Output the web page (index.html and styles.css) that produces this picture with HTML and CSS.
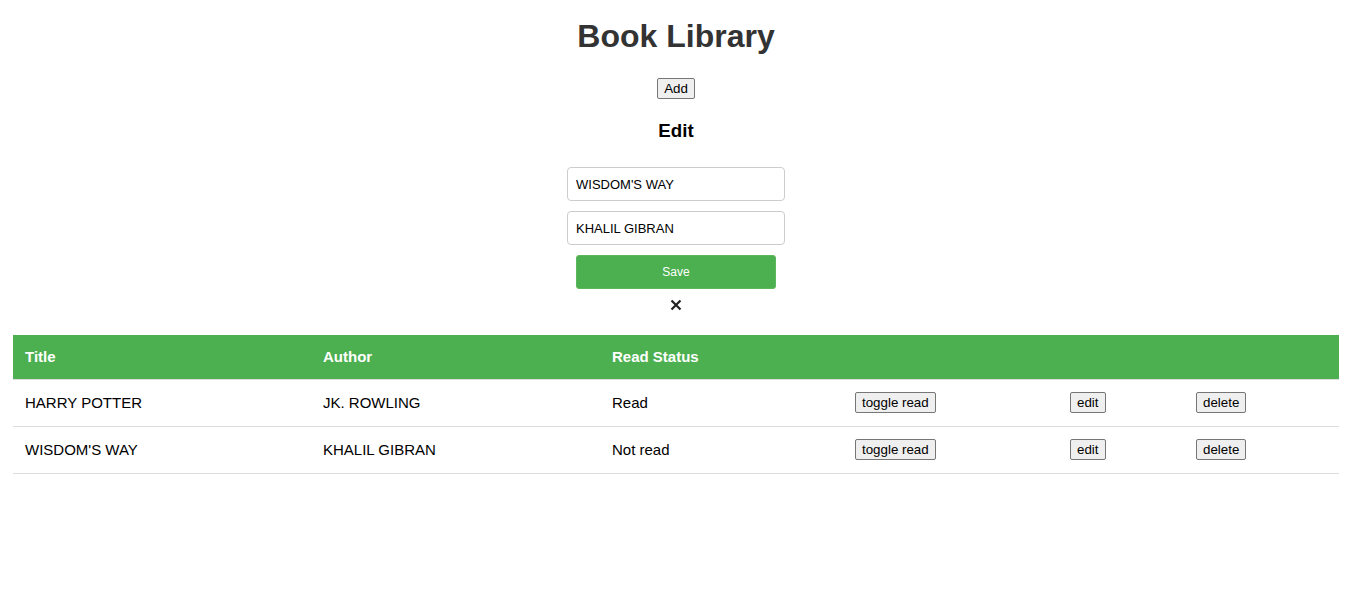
FILE: index.html
```html
<!DOCTYPE html>
<html>
<head>
<meta charset="utf-8">
<title>Book Library</title>
<link rel="stylesheet" href="styles.css">
</head>
<body>
  <div class="page">
    <h1 class="title">Book Library</h1>
    <div class="add-row"><button class="btn">Add</button></div>
    <h3 class="edit-title">Edit</h3>
    <form class="edit-form">
      <input class="field" type="text" value="WISDOM'S WAY">
      <input class="field" type="text" value="KHALIL GIBRAN">
      <button type="button" class="save">Save</button>
      <span class="close" aria-label="close">
        <svg width="12" height="12" viewBox="0 0 12 12"><path d="M1.5 1.5 L10.5 10.5 M10.5 1.5 L1.5 10.5" stroke="#222" stroke-width="2.2" stroke-linecap="butt"/></svg>
      </span>
    </form>
    <table class="books">
      <colgroup>
        <col class="c1"><col class="c2"><col class="c3"><col class="c4"><col class="c5"><col class="c6">
      </colgroup>
      <thead>
        <tr><th>Title</th><th>Author</th><th>Read Status</th><th></th><th></th><th></th></tr>
      </thead>
      <tbody>
        <tr>
          <td>HARRY POTTER</td><td>JK. ROWLING</td><td>Read</td>
          <td><button class="btn">toggle read</button></td>
          <td><button class="btn">edit</button></td>
          <td><button class="btn">delete</button></td>
        </tr>
        <tr>
          <td>WISDOM'S WAY</td><td>KHALIL GIBRAN</td><td>Not read</td>
          <td><button class="btn">toggle read</button></td>
          <td><button class="btn">edit</button></td>
          <td><button class="btn">delete</button></td>
        </tr>
      </tbody>
    </table>
  </div>
</body>
</html>
```
FILE: styles.css
```css
html, body {
  margin: 0;
  padding: 0;
  background: #fff;
}
body {
  font-family: "Liberation Sans", Arial, sans-serif;
  color: #000;
}
.page {
  padding: 0 15px 0 13px;
}
.title {
  margin: 18px 0 0;
  font-size: 32px;
  line-height: 37px;
  font-weight: bold;
  color: #333;
  text-align: center;
}
.add-row {
  margin-top: 23px;
  display: flex;
  justify-content: center;
}
.btn {
  font-family: "Liberation Sans", Arial, sans-serif;
  font-size: 13.33px;
  height: 21px;
  padding: 0 6px;
  line-height: 19px;
  border: 1px solid #767676;
  border-radius: 2px;
  background: #efefef;
  color: #000;
}
.edit-title {
  margin: 21px 0 0;
  font-size: 18.72px;
  line-height: 22px;
  font-weight: bold;
  text-align: center;
}
.edit-form {
  margin: 25px 0 0;
  display: flex;
  flex-direction: column;
  align-items: center;
}
.field {
  box-sizing: border-box;
  width: 218px;
  height: 34px;
  margin: 0 0 10px;
  padding: 0 8px;
  border: 1px solid #ccc;
  border-radius: 4px;
  font-family: "Liberation Sans", Arial, sans-serif;
  font-size: 13px;
  color: #000;
  outline: none;
}
.save {
  box-sizing: border-box;
  width: 200px;
  height: 34px;
  margin: 0;
  border: 1px solid #5cb85c;
  border-radius: 3px;
  background: #4caf50;
  color: #fff;
  font-family: "Liberation Sans", Arial, sans-serif;
  font-size: 12px;
}
.close {
  display: block;
  margin-top: 10px;
  width: 12px;
  height: 12px;
  line-height: 0;
}
.books {
  margin-top: 24px;
  width: 100%;
  border-collapse: collapse;
  table-layout: fixed;
  font-size: 15px;
}
.c1 { width: 298px; }
.c2 { width: 289px; }
.c3 { width: 243px; }
.c4 { width: 215px; }
.c5 { width: 126px; }
.books th {
  background: #4caf50;
  color: #fff;
  font-weight: bold;
  text-align: left;
  height: 44px;
  padding: 0 12px 1px;
  box-sizing: border-box;
  vertical-align: middle;
  border-bottom: 1px solid #ddd;
}
.books td {
  height: 46px;
  padding: 0 12px;
  border-bottom: 1px solid #ddd;
  vertical-align: middle;
  text-align: left;
}
```
